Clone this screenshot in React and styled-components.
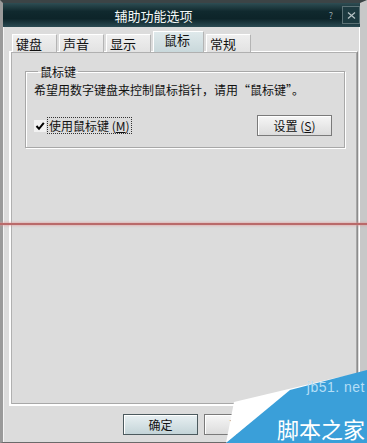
import React from "react"
import styled, { createGlobalStyle } from "styled-components"

const GlobalStyle = createGlobalStyle`
  html, body {
    margin: 0;
    padding: 0;
    background: #dcdcdc;
    overflow: hidden;
  }
  body {
    font-family: "Noto Sans CJK SC", "Liberation Sans", sans-serif;
    font-size: 12px;
    color: #111;
  }
`

const tabs = ["键盘", "声音", "显示", "鼠标", "常规"]

const App = () => {
  return (
    <>
      <GlobalStyle />
      <Window>
        <TitleBar>
          <Title>辅助功能选项</Title>
          <TitleButtons>
            <HelpBtn>?</HelpBtn>
            <CloseBtn>
              <svg width="9" height="7" viewBox="0 0 9 7">
                <path d="M1 0.5 L8 6.5 M8 0.5 L1 6.5" stroke="#b8c4c6" strokeWidth="1.2" />
              </svg>
            </CloseBtn>
          </TitleButtons>
        </TitleBar>
        <Body>
          <TabRow>
            {tabs.map((t) => (
              <Tab key={t} $active={t === "鼠标"}>
                {t}
              </Tab>
            ))}
          </TabRow>
          <Panel>
            <Group>
              <Legend>鼠标键</Legend>
              <Hint>希望用数字键盘来控制鼠标指针，请用“鼠标键”。</Hint>
              <CheckRow>
                <CheckLabel>
                  <CheckBox>
                    <svg width="10" height="10" viewBox="0 0 10 10">
                      <path d="M1.5 5 L4 7.8 L8.8 1.8" stroke="#000" strokeWidth="2" fill="none" />
                    </svg>
                  </CheckBox>
                  <Focus>
                    使用鼠标键 (<u>M</u>)
                  </Focus>
                </CheckLabel>
                <Button $w={75}>
                  设置 (<u>S</u>)
                </Button>
              </CheckRow>
            </Group>
          </Panel>
          <Footer>
            <Button $w={75} $default>
              确定
            </Button>
            <Button $w={75}>取消</Button>
          </Footer>
        </Body>
        <RedLine />
        <Watermark>
          <svg width="141" height="75" viewBox="0 0 141 75">
            <polygon points="0,75 8,34 109,10 141,4 141,10 64,24" fill="#ffffff" />
            <polygon points="0,75 64,22 141,2 141,75" fill="#3a9fd9" />
          </svg>
          <Site>jb51. net</Site>
          <Brand>脚本之家</Brand>
        </Watermark>
      </Window>
    </>
  )
}

const Window = styled.div`
  position: relative;
  width: 367px;
  height: 443px;
  box-sizing: border-box;
  display: flex;
  flex-direction: column;
  background: #dcdcdc;
  border-top: 3px solid #3c4446;
  border-left: 3px solid #9a9a9a;
  border-right: 7px solid #c8c8c8;
  border-bottom: 1px solid #6a6a6a;
`

const TitleBar = styled.div`
  height: 24px;
  display: flex;
  align-items: center;
  justify-content: center;
  position: relative;
  background: linear-gradient(
    to bottom,
    #2e4d53 0%,
    #10292e 35%,
    #0d2429 65%,
    #2a4a52 100%
  );
`

const Title = styled.div`
  color: #f4f8f8;
  font-size: 13px;
  margin-left: -56px;
`

const TitleButtons = styled.div`
  position: absolute;
  right: 0;
  top: 3px;
  display: flex;
  align-items: center;
  gap: 5px;
`

const HelpBtn = styled.div`
  color: #9aa8aa;
  font-size: 9px;
  width: 12px;
  text-align: center;
`

const CloseBtn = styled.div`
  width: 16px;
  height: 16px;
  border: 1px solid #5c7276;
  display: flex;
  align-items: center;
  justify-content: center;
  background: #1d3a40;
`

const Body = styled.div`
  flex: 1;
  display: flex;
  flex-direction: column;
  padding: 4px 0 0 5px;
  border-left: 1px solid #f4f4f4;
  border-right: 1px solid #ffffff;
`

const TabRow = styled.div`
  display: flex;
  align-items: flex-end;
  gap: 2px;
  padding-left: 3px;
  height: 21px;
  position: relative;
  z-index: 1;
  margin-bottom: -1px;
`

const Tab = styled.div`
  box-sizing: border-box;
  width: ${(p) => (p.$active ? 51 : 45)}px;
  height: ${(p) => (p.$active ? 21 : 18)}px;
  display: flex;
  align-items: ${(p) => (p.$active ? "flex-start" : "flex-end")};
  padding-left: ${(p) => (p.$active ? 10 : 3)}px;
  font-size: 13px;
  line-height: 16px;
  border: 1px solid #b4b4b4;
  border-top-color: #ffffff;
  border-left-color: #ffffff;
  border-bottom: none;
  background: ${(p) =>
    p.$active
      ? "linear-gradient(to bottom, #dfe9eb, #c9d8db)"
      : "linear-gradient(to bottom, #efefef, #e2e2e2)"};
`

const Panel = styled.div`
  box-sizing: border-box;
  width: 349px;
  height: 355px;
  margin-left: 0;
  border-top: 1px solid #ffffff;
  border-left: 2px solid #ffffff;
  border-right: 1px solid #8c8c8c;
  border-bottom: 2px solid #ffffff;
  box-shadow: inset 1px 1px 0 #b0b0b0, inset -1px -1px 0 #a8a8a8;
  padding: 12px 0 0 14px;
`

const Group = styled.fieldset`
  box-sizing: border-box;
  width: 320px;
  height: 84px;
  margin: 0;
  padding: 0 0 0 8px;
  border: 1px solid #a8a8a8;
  box-shadow: 1px 1px 0 #ffffff, inset 1px 1px 0 #ffffff;
  display: flex;
  flex-direction: column;
`

const Legend = styled.legend`
  padding: 0 2px;
  margin-left: 4px;
  font-size: 12px;
  line-height: 15px;
`

const Hint = styled.div`
  font-size: 12px;
  line-height: 16px;
  margin-top: 3px;
`

const CheckRow = styled.div`
  display: flex;
  align-items: center;
  justify-content: space-between;
  margin-top: 17px;
  padding-right: 12px;
`

const CheckLabel = styled.div`
  display: flex;
  align-items: center;
  gap: 1px;
`

const CheckBox = styled.div`
  width: 12px;
  height: 12px;
  background: #f2f2f2;
  display: flex;
  align-items: center;
  justify-content: center;
`

const Focus = styled.span`
  border: 1px dotted #333;
  padding: 0 1px;
  font-size: 12px;
  line-height: 15px;
  u {
    text-decoration: underline;
  }
`

const Button = styled.div`
  box-sizing: border-box;
  width: ${(p) => p.$w}px;
  height: 21px;
  display: flex;
  align-items: center;
  justify-content: center;
  font-size: 12px;
  border: 1px solid ${(p) => (p.$default ? "#4c5a5e" : "#7a7a7a")};
  box-shadow: inset 1px 1px 0 #ffffff;
  background: ${(p) =>
    p.$default
      ? "linear-gradient(to bottom, #e8f0f2, #c4d4d8)"
      : "linear-gradient(to bottom, #f6f6f6, #dcdcdc)"};
`

const Footer = styled.div`
  flex: 1;
  display: flex;
  align-items: center;
  gap: 6px;
  padding-left: 114px;
`

const RedLine = styled.div`
  position: absolute;
  left: -3px;
  right: -7px;
  top: 220px;
  height: 2px;
  background: #b96a6a;
  box-shadow: 0 0 2px 1px rgba(230, 150, 150, 0.5);
`

const Watermark = styled.div`
  position: absolute;
  right: -7px;
  bottom: -1px;
  width: 141px;
  height: 75px;
  svg {
    display: block;
  }
`

const Site = styled.div`
  position: absolute;
  right: 2px;
  top: 11px;
  font-family: "Liberation Sans", sans-serif;
  font-size: 14px;
  line-height: 16px;
  color: #b4def6;
  letter-spacing: 0.5px;
`

const Brand = styled.div`
  position: absolute;
  right: 2px;
  bottom: 2px;
  font-size: 22px;
  line-height: 26px;
  color: #ffffff;
`

export default App
